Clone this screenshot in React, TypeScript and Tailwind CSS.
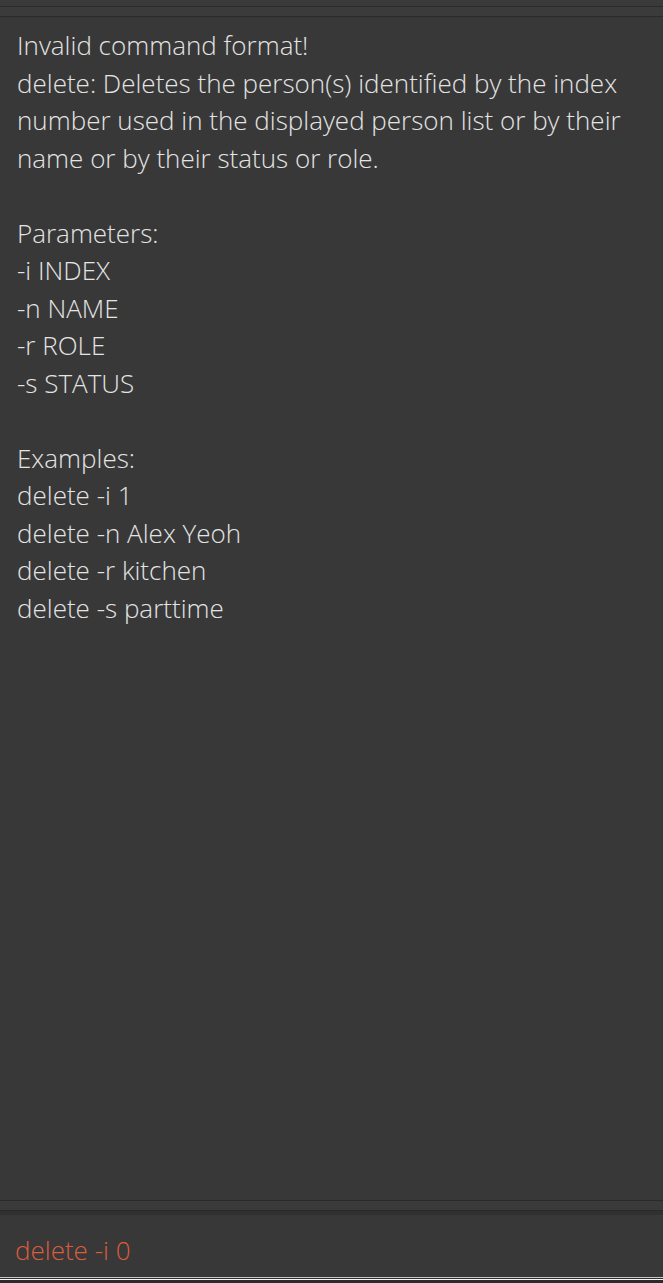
const lines = [
  'Invalid command format!',
  'delete: Deletes the person(s) identified by the index',
  'number used in the displayed person list or by their',
  'name or by their status or role.',
  '',
  'Parameters:',
  '-i INDEX',
  '-n NAME',
  '-r ROLE',
  '-s STATUS',
  '',
  'Examples:',
  'delete -i 1',
  'delete -n Alex Yeoh',
  'delete -r kitchen',
  'delete -s parttime',
];

export default function App() {
  return (
    <div
      className="flex h-[1283px] w-[663px] flex-col overflow-hidden bg-[#383838]"
      style={{ fontFamily: '"Open Sans", "Segoe UI", sans-serif' }}
    >
      {/* top strip */}
      <div className="h-[6px] shrink-0 bg-[#3a3a3a]" />
      <div className="h-[1px] shrink-0 bg-[#2a2a2a]" />
      <div className="h-[9px] shrink-0 bg-[#3b3b3b]" />
      <div className="h-[1px] shrink-0 bg-[#2a2a2a]" />

      {/* result display */}
      <div className="min-h-0 flex-1 px-[17px] pt-[10px] text-[26px] font-light leading-[37.5px] text-[#e4e4e4]">
        {lines.map((line, i) => (
          <div key={i} className="h-[37.5px] whitespace-pre">
            {line}
          </div>
        ))}
      </div>

      <div className="h-[1px] shrink-0 bg-[#2a2a2a]" />
      <div className="h-[9px] shrink-0 bg-[#3a3a3a]" />
      <div className="h-[1px] shrink-0 bg-[#2a2a2a]" />
      <div className="h-[4px] shrink-0 bg-[#303030]" />

      {/* command box */}
      <div className="flex h-[62px] shrink-0 items-center px-[15px] pt-[8px] text-[26px] font-light text-[#dc5c3e]">
        delete -i 0
      </div>
      <div className="h-[1px] shrink-0 bg-[#c8c8c8]" />
      <div className="h-[1px] shrink-0 bg-[#2f2f2f]" />
      <div className="h-[1px] shrink-0 bg-[#f4f4f4]" />
      <div className="h-[3px] shrink-0 bg-[#2b2b2b]" />
    </div>
  );
}
